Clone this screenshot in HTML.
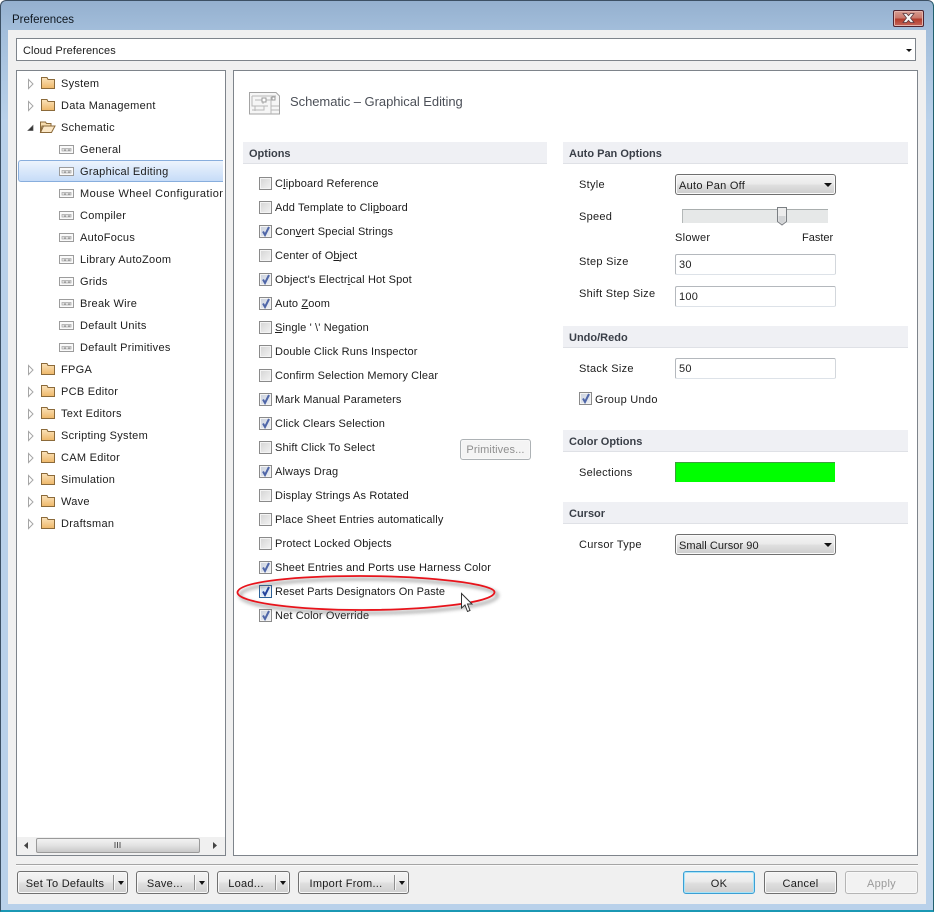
<!DOCTYPE html>
<html><head><meta charset="utf-8"><title>Preferences</title>
<style>
html,body{margin:0;padding:0;width:934px;height:912px;overflow:hidden;background:#fff}
body{position:relative;font:11px "Liberation Sans",sans-serif;color:#1c1c1c;letter-spacing:.28px}
div{position:absolute;box-sizing:border-box}
.t{white-space:nowrap;line-height:14px;height:14px;margin-top:1px}
.k{letter-spacing:.14px}
.win{left:0;top:0;width:934px;height:912px;background:linear-gradient(#94b0cf 0,#a3bedb 30px,#b9d1ea 120px,#b9d1ea 100%);border:1px solid #3c5064;border-bottom:2px solid #1b98b4;border-right:1px solid #22606e;border-radius:6px 6px 0 0}
.cnt{left:8px;top:30px;width:918px;height:874px;background:#f0f0f0}
.box{background:#fff;border:1px solid #7e848b}
.sec{height:22px;background:#eff0f4;border-bottom:1px solid #dfe1e6;font-weight:bold;color:#3a3f48;padding:5px 0 0 6px;line-height:14px;letter-spacing:0}
.cb{width:13px;height:13px;border:1px solid #8a8a8a;background:linear-gradient(135deg,#d4d4d4,#f3f3f3);box-shadow:inset 0 0 0 1px #f4f4f4}
.cb.c{background:linear-gradient(135deg,#c9d0dc,#f0f2f6)}
.cb svg{position:absolute;left:1px;top:0}
.btn{height:23px;border:1px solid #707070;border-radius:3px;background:linear-gradient(#f4f4f4 0,#ebebeb 45%,#dedede 55%,#cfcfcf 100%);box-shadow:inset 0 0 0 1px #f8f8f8;text-align:center;line-height:23px;padding-top:1px;color:#1c1c1c}
.sp{top:3px;width:1px;height:15px;background:#8e8e8e;box-shadow:1px 0 0 #f6f6f6}
.ar{width:0;height:0;border-left:4px solid transparent;border-right:4px solid transparent;border-top:4px solid #111}
.inp{height:21px;left:675px;width:161px;background:#fff;border:1px solid #b4b8bd;border-bottom-color:#dde2e8;border-right-color:#d3d7dc;border-radius:2px;padding:3px 0 0 3px;line-height:14px}
.cmb{left:675px;width:161px;height:21px;border:1px solid #6f6f6f;border-radius:3px;background:linear-gradient(#f4f4f4 0,#ebebeb 45%,#dedede 55%,#cdcdcd 100%);box-shadow:inset 0 0 0 1px #fafafa;padding:4px 0 0 3px;line-height:14px}
</style></head><body>
<div class="win"></div>
<div class="cnt"></div>
<div class="t" style="left:12px;top:12px;font-size:11.5px;color:#101820;letter-spacing:0">Preferences</div>
<div style="left:893px;top:10px;width:31px;height:17px;border:1px solid #4e2430;border-radius:2px;background:linear-gradient(#d79d92 0,#c9796d 45%,#b23c2c 55%,#c6665a 100%);box-shadow:inset 0 0 0 1px #e4b4ac">
<svg width="29" height="15" style="position:absolute;left:0;top:0"><path d="M9 2.500h3.500l2 2.200 2-2.200H20l-3.500 4.500 3.500 4.500h-3.500l-2-2.200-2 2.200H9l3.500-4.500z" fill="#f6f6f6" stroke="#5a3a40" stroke-width=".8"/></svg></div>

<div class="box" style="left:16px;top:38px;width:900px;height:23px"></div>
<div class="t" style="left:23px;top:43px;letter-spacing:.1px">Cloud Preferences</div>
<div class="ar" style="left:906px;top:49px;border-top-width:3px;border-left-width:3px;border-right-width:3px"></div>

<!-- tree -->
<div class="box" style="left:16px;top:70px;width:210px;height:786px"></div>
<div style="left:18px;top:160px;width:205px;height:22px;border:1px solid #88aedd;border-right:0;border-radius:3px 0 0 3px;background:linear-gradient(#edf4fd,#c6dcf8)"></div>

<svg width="234" height="540" style="position:absolute;left:0;top:0">
<defs>
<linearGradient id="fg" x1="0" y1="0" x2="0" y2="1"><stop offset="0" stop-color="#fbe3bb"/><stop offset="1" stop-color="#eeb768"/></linearGradient>
<g id="tr"><path d="M0.500 0.500L5 5L0.500 9.500z" fill="#fff" stroke="#a6a6a6"/></g>
<g id="fo"><path d="M.5 2.500V.5h5.500l1 2h6.500V11.500H.5z" fill="url(#fg)" stroke="#8b6a3a"/></g>
<g id="pg"><rect x=".5" y=".5" width="14" height="8" fill="#fafafa" stroke="#9c9c9c"/><path d="M3 3.500h9v2.500H3z" fill="#e8e8e8" stroke="#a8a8a8" stroke-width=".8"/><path d="M5 4.500l1 1 1-1M9 4.500l1 1 1-1" stroke="#777" fill="none" stroke-width=".7"/></g>
</defs>
<use href="#tr" x="28" y="79"/><use href="#fo" x="41" y="77"/>
<use href="#tr" x="28" y="101"/><use href="#fo" x="41" y="99"/>
<path d="M28 130.500L33 125.500V130.500z" fill="#333" stroke="#555" stroke-width=".7"/>
<path d="M40.500 132.500V122h5l1 1.500H51V126h-9z" fill="#f6dcae" stroke="#8b6a3a"/><path d="M40.500 132.500l3-6.500H55l-3.500 6.500z" fill="#fbe7c6" stroke="#8b6a3a"/>
<use href="#pg" x="59" y="145"/><use href="#pg" x="59" y="167"/><use href="#pg" x="59" y="189"/><use href="#pg" x="59" y="211"/><use href="#pg" x="59" y="233"/><use href="#pg" x="59" y="255"/><use href="#pg" x="59" y="277"/><use href="#pg" x="59" y="299"/><use href="#pg" x="59" y="321"/><use href="#pg" x="59" y="343"/>
<use href="#tr" x="28" y="365"/><use href="#fo" x="41" y="363"/>
<use href="#tr" x="28" y="387"/><use href="#fo" x="41" y="385"/>
<use href="#tr" x="28" y="409"/><use href="#fo" x="41" y="407"/>
<use href="#tr" x="28" y="431"/><use href="#fo" x="41" y="429"/>
<use href="#tr" x="28" y="453"/><use href="#fo" x="41" y="451"/>
<use href="#tr" x="28" y="475"/><use href="#fo" x="41" y="473"/>
<use href="#tr" x="28" y="497"/><use href="#fo" x="41" y="495"/>
<use href="#tr" x="28" y="519"/><use href="#fo" x="41" y="517"/>
</svg>

<div class="t" style="left:61px;top:76px">System</div>
<div class="t" style="left:61px;top:98px">Data Management</div>
<div class="t" style="left:61px;top:120px">Schematic</div>
<div class="t" style="left:80px;top:142px">General</div>
<div class="t" style="left:80px;top:164px">Graphical Editing</div>
<div class="t" style="left:80px;top:186px;width:143px;overflow:hidden;letter-spacing:.4px">Mouse Wheel Configuration</div>
<div class="t" style="left:80px;top:208px">Compiler</div>
<div class="t" style="left:80px;top:230px">AutoFocus</div>
<div class="t" style="left:80px;top:252px">Library AutoZoom</div>
<div class="t" style="left:80px;top:274px">Grids</div>
<div class="t" style="left:80px;top:296px">Break Wire</div>
<div class="t" style="left:80px;top:318px">Default Units</div>
<div class="t" style="left:80px;top:340px">Default Primitives</div>
<div class="t" style="left:61px;top:362px">FPGA</div>
<div class="t" style="left:61px;top:384px">PCB Editor</div>
<div class="t" style="left:61px;top:406px">Text Editors</div>
<div class="t" style="left:61px;top:428px">Scripting System</div>
<div class="t" style="left:61px;top:450px">CAM Editor</div>
<div class="t" style="left:61px;top:472px">Simulation</div>
<div class="t" style="left:61px;top:494px">Wave</div>
<div class="t" style="left:61px;top:516px">Draftsman</div>

<!-- tree scrollbar -->
<div style="left:17px;top:837px;width:208px;height:18px;background:#f0f0f0"></div>
<div style="left:36px;top:838px;width:164px;height:15px;border:1px solid #9a9a9a;border-radius:2px;background:linear-gradient(#f2f2f2,#e2e2e2 50%,#c8c8c8)"></div>
<svg width="234" height="20" style="position:absolute;left:0;top:836px"><path d="M28 6l-4 3.500 4 3.500z" fill="#444"/><path d="M213 6l4 3.500-4 3.500z" fill="#444"/><path d="M115 6v6M117.500 6v6M120 6v6" stroke="#555"/></svg>

<!-- right panel -->
<div class="box" style="left:233px;top:70px;width:685px;height:786px"></div>
<svg width="34" height="26" style="position:absolute;left:248px;top:91px"><path d="M1.500 1.500H28l3.500 3.500v18H1.500z" fill="#f6f6f6" stroke="#a4a4a4"/><path d="M4 5h24M4 5v10h16M7 9h8v4M15 9h8v-3M4 19h12v-4M23 15h8M23 19h8M23 6v17M7 15v5" fill="none" stroke="#b8b8b8"/><rect x="14" y="7" width="4" height="4" fill="#fff" stroke="#999"/><rect x="24" y="6" width="3" height="3" fill="#fff" stroke="#999"/></svg>
<div class="t" style="left:290px;top:94px;font-size:13px;color:#4c5058;letter-spacing:-.05px">Schematic – Graphical Editing</div>

<div class="sec" style="left:243px;top:142px;width:304px">Options</div>
<div class="sec" style="left:563px;top:142px;width:345px">Auto Pan Options</div>
<div class="sec" style="left:563px;top:326px;width:345px">Undo/Redo</div>
<div class="sec" style="left:563px;top:430px;width:345px">Color Options</div>
<div class="sec" style="left:563px;top:502px;width:345px">Cursor</div>

<!-- checkboxes -->
<div class="cb" style="left:259px;top:177px"></div><div class="t k" style="left:275px;top:176px">C<u>l</u>ipboard Reference</div>
<div class="cb" style="left:259px;top:201px"></div><div class="t k" style="left:275px;top:200px">Add Template to Cli<u>p</u>board</div>
<div class="cb c" style="left:259px;top:225px"><svg width="11" height="11"><path d="M2 5.500l2 3.500 4-8" fill="none" stroke="#4f66a8" stroke-width="2"/></svg></div><div class="t k" style="left:275px;top:224px">Con<u>v</u>ert Special Strings</div>
<div class="cb" style="left:259px;top:249px"></div><div class="t k" style="left:275px;top:248px">Center of O<u>b</u>ject</div>
<div class="cb c" style="left:259px;top:273px"><svg width="11" height="11"><path d="M2 5.500l2 3.500 4-8" fill="none" stroke="#4f66a8" stroke-width="2"/></svg></div><div class="t k" style="left:275px;top:272px">Object's Electr<u>i</u>cal Hot Spot</div>
<div class="cb c" style="left:259px;top:297px"><svg width="11" height="11"><path d="M2 5.500l2 3.500 4-8" fill="none" stroke="#4f66a8" stroke-width="2"/></svg></div><div class="t k" style="left:275px;top:296px">Auto <u>Z</u>oom</div>
<div class="cb" style="left:259px;top:321px"></div><div class="t k" style="left:275px;top:320px"><u>S</u>ingle ' \' Negation</div>
<div class="cb" style="left:259px;top:345px"></div><div class="t k" style="left:275px;top:344px">Double Click Runs Inspector</div>
<div class="cb" style="left:259px;top:369px"></div><div class="t k" style="left:275px;top:368px">Confirm Selection Memory Clear</div>
<div class="cb c" style="left:259px;top:393px"><svg width="11" height="11"><path d="M2 5.500l2 3.500 4-8" fill="none" stroke="#4f66a8" stroke-width="2"/></svg></div><div class="t k" style="left:275px;top:392px">Mark Manual Parameters</div>
<div class="cb c" style="left:259px;top:417px"><svg width="11" height="11"><path d="M2 5.500l2 3.500 4-8" fill="none" stroke="#4f66a8" stroke-width="2"/></svg></div><div class="t k" style="left:275px;top:416px">Click Clears Selection</div>
<div class="cb" style="left:259px;top:441px"></div><div class="t k" style="left:275px;top:440px">Shift Click To Select</div>
<div class="cb c" style="left:259px;top:465px"><svg width="11" height="11"><path d="M2 5.500l2 3.500 4-8" fill="none" stroke="#4f66a8" stroke-width="2"/></svg></div><div class="t k" style="left:275px;top:464px">Always Drag</div>
<div class="cb" style="left:259px;top:489px"></div><div class="t k" style="left:275px;top:488px">Display Strings As Rotated</div>
<div class="cb" style="left:259px;top:513px"></div><div class="t k" style="left:275px;top:512px">Place Sheet Entries automatically</div>
<div class="cb" style="left:259px;top:537px"></div><div class="t k" style="left:275px;top:536px">Protect Locked Objects</div>
<div class="cb c" style="left:259px;top:561px"><svg width="11" height="11"><path d="M2 5.500l2 3.500 4-8" fill="none" stroke="#4f66a8" stroke-width="2"/></svg></div><div class="t k" style="left:275px;top:560px">Sheet Entries and Ports use Harness Color</div>
<div class="cb c" style="left:259px;top:585px;border-color:#2b5f96;background:linear-gradient(135deg,#cfe0f2,#eef5fc)"><svg width="11" height="11"><path d="M2 5.500l2 3.500 4-8" fill="none" stroke="#24439c" stroke-width="2"/></svg></div><div class="t k" style="left:275px;top:584px;letter-spacing:.06px">Reset Parts Designators On Paste</div>
<div class="cb c" style="left:259px;top:609px"><svg width="11" height="11"><path d="M2 5.500l2 3.500 4-8" fill="none" stroke="#4f66a8" stroke-width="2"/></svg></div><div class="t k" style="left:275px;top:608px">Net Color Override</div>

<div class="btn" style="left:460px;top:439px;width:71px;height:21px;border-color:#adb2b5;color:#8f8f8f;background:#f4f4f4;line-height:19px;letter-spacing:.1px">Primitives...</div>

<!-- right controls -->
<div class="t" style="left:579px;top:177px">Style</div>
<div class="cmb" style="top:174px">Auto Pan Off<div class="ar" style="left:148px;top:8px"></div></div>
<div class="t" style="left:579px;top:209px">Speed</div>
<div style="left:682px;top:209px;width:146px;height:14px;background:#e6e8e8;border-top:1px solid #a9aeae;border-left:1px solid #b4b8b8"></div>
<svg width="14" height="22" style="position:absolute;left:776px;top:206px"><path d="M1.500 1.500h9v14l-4.500 3.500-4.500-3.500z" fill="#ececec" stroke="#7b7f83"/><path d="M2.500 10h7v5l-3.500 3-3.500-3z" fill="#d2d4d6"/></svg>
<div class="t" style="left:675px;top:230px">Slower</div>
<div class="t" style="left:802px;top:230px;letter-spacing:0">Faster</div>
<div class="t" style="left:579px;top:254px">Step Size</div>
<div class="inp" style="top:254px">30</div>
<div class="t" style="left:579px;top:286px">Shift Step Size</div>
<div class="inp" style="top:286px">100</div>
<div class="t" style="left:579px;top:361px">Stack Size</div>
<div class="inp" style="top:358px">50</div>
<div class="cb c" style="left:579px;top:392px"><svg width="11" height="11"><path d="M2 5.500l2 3.500 4-8" fill="none" stroke="#4f66a8" stroke-width="2"/></svg></div><div class="t" style="left:595px;top:392px">Group Undo</div>
<div class="t" style="left:579px;top:465px">Selections</div>
<div style="left:675px;top:462px;width:160px;height:20px;background:#00ff00;border-top:1px solid #3da03d;border-left:1px solid #3da03d"></div>
<div class="t" style="left:579px;top:537px">Cursor Type</div>
<div class="cmb" style="top:534px;letter-spacing:.05px">Small Cursor 90<div class="ar" style="left:148px;top:8px"></div></div>

<!-- separator -->
<div style="left:16px;top:864px;width:902px;height:1px;background:#a5a5a5;box-shadow:0 1px 0 #fafafa"></div>

<!-- bottom buttons -->
<div class="btn" style="left:17px;top:871px;width:111px;padding-right:15px">Set To Defaults<div class="sp" style="left:95px"></div><div class="ar" style="left:100px;top:9px;border-width:4px 3.500px 0"></div></div>
<div class="btn" style="left:136px;top:871px;width:73px;padding-right:15px">Save...<div class="sp" style="left:57px"></div><div class="ar" style="left:62px;top:9px;border-width:4px 3.500px 0"></div></div>
<div class="btn" style="left:217px;top:871px;width:73px;padding-right:15px">Load...<div class="sp" style="left:57px"></div><div class="ar" style="left:62px;top:9px;border-width:4px 3.500px 0"></div></div>
<div class="btn" style="left:298px;top:871px;width:111px;padding-right:15px">Import From...<div class="sp" style="left:95px"></div><div class="ar" style="left:100px;top:9px;border-width:4px 3.500px 0"></div></div>
<div class="btn" style="left:683px;top:871px;width:72px;border-color:#3c9fd4;box-shadow:inset 0 0 0 1px #a8e4f8">OK</div>
<div class="btn" style="left:764px;top:871px;width:73px">Cancel</div>
<div class="btn" style="left:845px;top:871px;width:73px;border-color:#b5b5b5;background:#f2f2f2;color:#9a9a9a">Apply</div>

<!-- annotation -->
<svg width="934" height="912" style="position:absolute;left:0;top:0">
<defs><filter id="b" x="-10%" y="-40%" width="120%" height="180%"><feGaussianBlur stdDeviation="1.800"/></filter></defs>
<path d="M240 595C243 584 303 579 363 579C433 579 497 587 497.500 595C498 606 428 613 365 613C303 613 239 606 240 595z" fill="none" stroke="#666" stroke-width="3" opacity=".55" filter="url(#b)"/>
<path d="M237.500 592C240 581 300 576 360 576C430 576 494 584 494.500 592C495 603 425 610 362 610C300 610 236 603 237.500 592z" fill="none" stroke="#e8131b" stroke-width="1.800"/>
<path d="M461.500 593.500V608l3.500-3 2.500 6.500 2.500-1-2.500-6.500h4.500z" fill="#fff" stroke="#333" stroke-width="1"/>
</svg>
</body></html>
